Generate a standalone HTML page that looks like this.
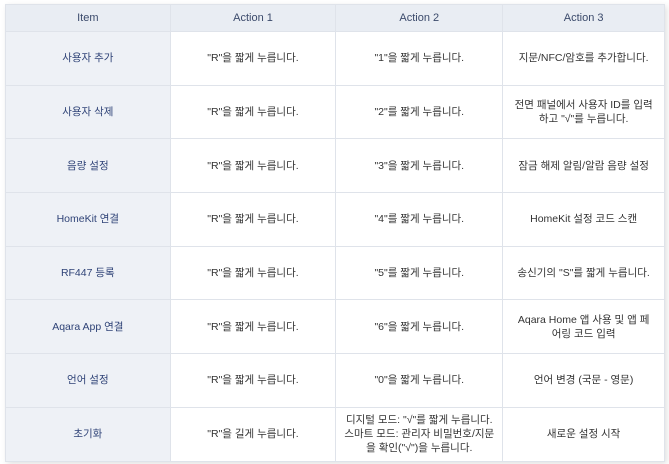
<!DOCTYPE html>
<html><head><meta charset="utf-8"><style>
body{margin:0;background:#fff;width:669px;height:464px;overflow:hidden;font-family:"Liberation Sans","Noto Sans CJK KR",sans-serif;}
table{position:absolute;left:5px;top:4px;width:660px;border-collapse:collapse;box-shadow:2px 2px 6px rgba(0,0,0,.12);font-size:10.5px;color:#333;word-break:keep-all;}
td,th{border:1px solid #dfe3ea;text-align:center;padding:0 8px;line-height:14px;}
th{background:#e9edf3;color:#3b4a6b;font-weight:normal;height:26px;font-size:11px;}
td.h{background:#eef1f6;color:#2f4377;}
tr.r td{height:52.7px;}
td.nw{white-space:nowrap;padding:0;}
</style></head><body>
<table>
<colgroup><col style="width:165px"><col style="width:166px"><col style="width:167px"><col style="width:162px"></colgroup>
<tr><th>Item</th><th>Action 1</th><th>Action 2</th><th>Action 3</th></tr>
<tr class="r"><td class="h">사용자 추가</td><td>"R"을 짧게 누릅니다.</td><td>"1"을 짧게 누릅니다.</td><td>지문/NFC/암호를 추가합니다.</td></tr>
<tr class="r"><td class="h">사용자 삭제</td><td>"R"을 짧게 누릅니다.</td><td>"2"를 짧게 누릅니다.</td><td>전면 패널에서 사용자 ID를 입력<br>하고 "√"를 누릅니다.</td></tr>
<tr class="r"><td class="h">음량 설정</td><td>"R"을 짧게 누릅니다.</td><td>"3"을 짧게 누릅니다.</td><td>잠금 해제 알림/알람 음량 설정</td></tr>
<tr class="r"><td class="h">HomeKit 연결</td><td>"R"을 짧게 누릅니다.</td><td>"4"를 짧게 누릅니다.</td><td>HomeKit 설정 코드 스캔</td></tr>
<tr class="r"><td class="h">RF447 등록</td><td>"R"을 짧게 누릅니다.</td><td>"5"를 짧게 누릅니다.</td><td>송신기의 "S"를 짧게 누릅니다.</td></tr>
<tr class="r"><td class="h">Aqara App 연결</td><td>"R"을 짧게 누릅니다.</td><td>"6"을 짧게 누릅니다.</td><td>Aqara Home 앱 사용 및 앱 페<br>어링 코드 입력</td></tr>
<tr class="r"><td class="h">언어 설정</td><td>"R"을 짧게 누릅니다.</td><td>"0"을 짧게 누릅니다.</td><td>언어 변경 (국문 - 영문)</td></tr>
<tr class="r"><td class="h">초기화</td><td>"R"을 길게 누릅니다.</td><td class="nw">디지털 모드: "√"를 짧게 누릅니다.<br>스마트 모드: 관리자 비밀번호/지문<br>을 확인("√")을 누릅니다.</td><td>새로운 설정 시작</td></tr>
</table>
</body></html>
